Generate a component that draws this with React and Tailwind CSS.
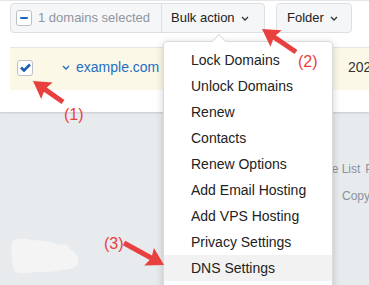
import React from "react";

const menuItems = [
  "Lock Domains",
  "Unlock Domains",
  "Renew",
  "Contacts",
  "Renew Options",
  "Add Email Hosting",
  "Add VPS Hosting",
  "Privacy Settings",
  "DNS Settings",
];

const Chevron = ({ color = "#333" }) => (
  <svg width="8" height="5" viewBox="0 0 8 5" fill="none">
    <path d="M1 1l3 3 3-3" stroke={color} strokeWidth="1.3" />
  </svg>
);

// tail (x1,y1) -> tip (x2,y2)
const Arrow = ({ x1, y1, x2, y2 }) => {
  const dx = x2 - x1;
  const dy = y2 - y1;
  const len = Math.hypot(dx, dy);
  const ux = dx / len;
  const uy = dy / len;
  const px = -uy;
  const py = ux;
  const hl = 17;
  const hw = 10;
  const sw = 2.5;
  const bx = x2 - ux * hl;
  const by = y2 - uy * hl;
  const pts = [
    [x1 + px * sw, y1 + py * sw],
    [bx + px * sw + ux * 2, by + py * sw + uy * 2],
    [bx + px * hw, by + py * hw],
    [x2, y2],
    [bx - px * hw, by - py * hw],
    [bx - px * sw + ux * 2, by - py * sw + uy * 2],
    [x1 - px * sw, y1 - py * sw],
  ]
    .map((p) => p.join(","))
    .join(" ");
  return <polygon points={pts} fill="#e8403e" />;
};

const App = () => {
  return (
    <div className="relative w-[369px] h-[285px] overflow-hidden bg-[#e8ebee] font-['Liberation_Sans',Arial,sans-serif]">
      <div className="h-[112px] bg-white border-t border-[#e6e6e6] shadow-[0_1px_2px_rgba(0,0,0,0.15)]">
        {/* toolbar */}
        <div className="flex gap-[11px] pl-[10px] pt-[2px]">
          <div className="flex h-[30px] w-[255px] rounded-[4px] border border-[#dcdfe4] bg-[#f5f6f8]">
            <div className="flex w-[151px] items-center gap-[6px] pl-[5px] border-r border-[#dcdfe4]">
              <div className="flex h-[16px] w-[16px] items-center justify-center rounded-[3px] border border-[#b9c0c9] bg-white">
                <div className="h-[2.5px] w-[8px] rounded-full bg-[#1a66c0]" />
              </div>
              <span className="text-[13px] text-[#8d95a1] whitespace-nowrap">
                1 domains selected
              </span>
            </div>
            <div className="flex items-center gap-[6px] pl-[9px] text-[13px] text-[#222]">
              Bulk action
              <Chevron />
            </div>
          </div>
          <div className="flex h-[30px] w-[76px] items-center gap-[6px] rounded-[4px] border border-[#dcdfe4] bg-[#f5f6f8] pl-[10px] text-[13px] text-[#222]">
            Folder
            <Chevron />
          </div>
        </div>

        {/* domain row */}
        <div className="ml-[10px] mt-[14px] flex h-[43px] items-center border-t border-[#e6e6e6] bg-[#fcf8e8] pb-[3px]">
          <div className="ml-[7px] flex h-[16px] w-[16px] items-center justify-center rounded-[3px] border border-[#b9c0c9] bg-white">
            <svg width="11" height="9" viewBox="0 0 11 9">
              <path d="M1 4.5l3 3L10 1.5" stroke="#1a5fb4" strokeWidth="2.6" fill="none" />
            </svg>
          </div>
          <div className="ml-[29px] flex items-center gap-[6px] text-[14px] text-[#1b6fc4]">
            <Chevron color="#1b6fc4" />
            example.com
          </div>
          <span className="ml-auto w-[21px] whitespace-nowrap text-[14px] text-[#333]">
            2025-01-12
          </span>
        </div>
      </div>

      {/* footer */}
      <div className="pl-[311px] pt-[49px] text-[12px] leading-[16px] text-[#8a919b] whitespace-nowrap">
        <div>
          Price List<span className="ml-[5px]">Privacy Policy</span>
        </div>
        <div className="mt-[11px] pl-[31px]">Copyright</div>
      </div>

      {/* redacted blob */}
      <svg className="absolute left-[10px] top-[237px]" width="70" height="40" viewBox="0 0 70 40">
        <path
          d="M2 4 Q10 0 22 3 Q40 4 50 8 Q58 6 60 12 Q70 18 68 26 Q66 32 52 33 Q38 36 24 35 Q10 38 4 34 Q0 20 2 4Z"
          fill="#f4f4f4"
        />
      </svg>

      {/* dropdown menu */}
      <div className="absolute left-[163px] top-[41px] w-[170px] h-[260px] rounded-[4px] border border-[#dadada] bg-white pt-[5px] shadow-[0_2px_8px_rgba(0,0,0,0.18)]">
        <div className="absolute left-[50px] top-[-6px] h-[10px] w-[10px] rotate-45 border-l border-t border-[#dadada] bg-white" />
        {menuItems.map((item) => (
          <div
            key={item}
            className={`flex h-[26px] items-center pl-[27px] text-[14px] text-[#222] ${
              item === "DNS Settings" ? "bg-[#f2f2f2]" : ""
            }`}
          >
            {item}
          </div>
        ))}
      </div>

      {/* annotations */}
      <svg className="pointer-events-none absolute left-0 top-0" width="369" height="285">
        <Arrow x1={63} y1={102} x2={33} y2={81} />
        <Arrow x1={296} y1={52} x2={262} y2={29} />
        <Arrow x1={124} y1={243} x2={164} y2={265} />
      </svg>
      <span className="absolute left-[64px] top-[103px] text-[16px] text-[#e8403e]">(1)</span>
      <span className="absolute left-[298px] top-[50px] text-[16px] text-[#e8403e]">(2)</span>
      <span className="absolute left-[104px] top-[232px] text-[16px] text-[#e8403e]">(3)</span>
    </div>
  );
};

export default App;
